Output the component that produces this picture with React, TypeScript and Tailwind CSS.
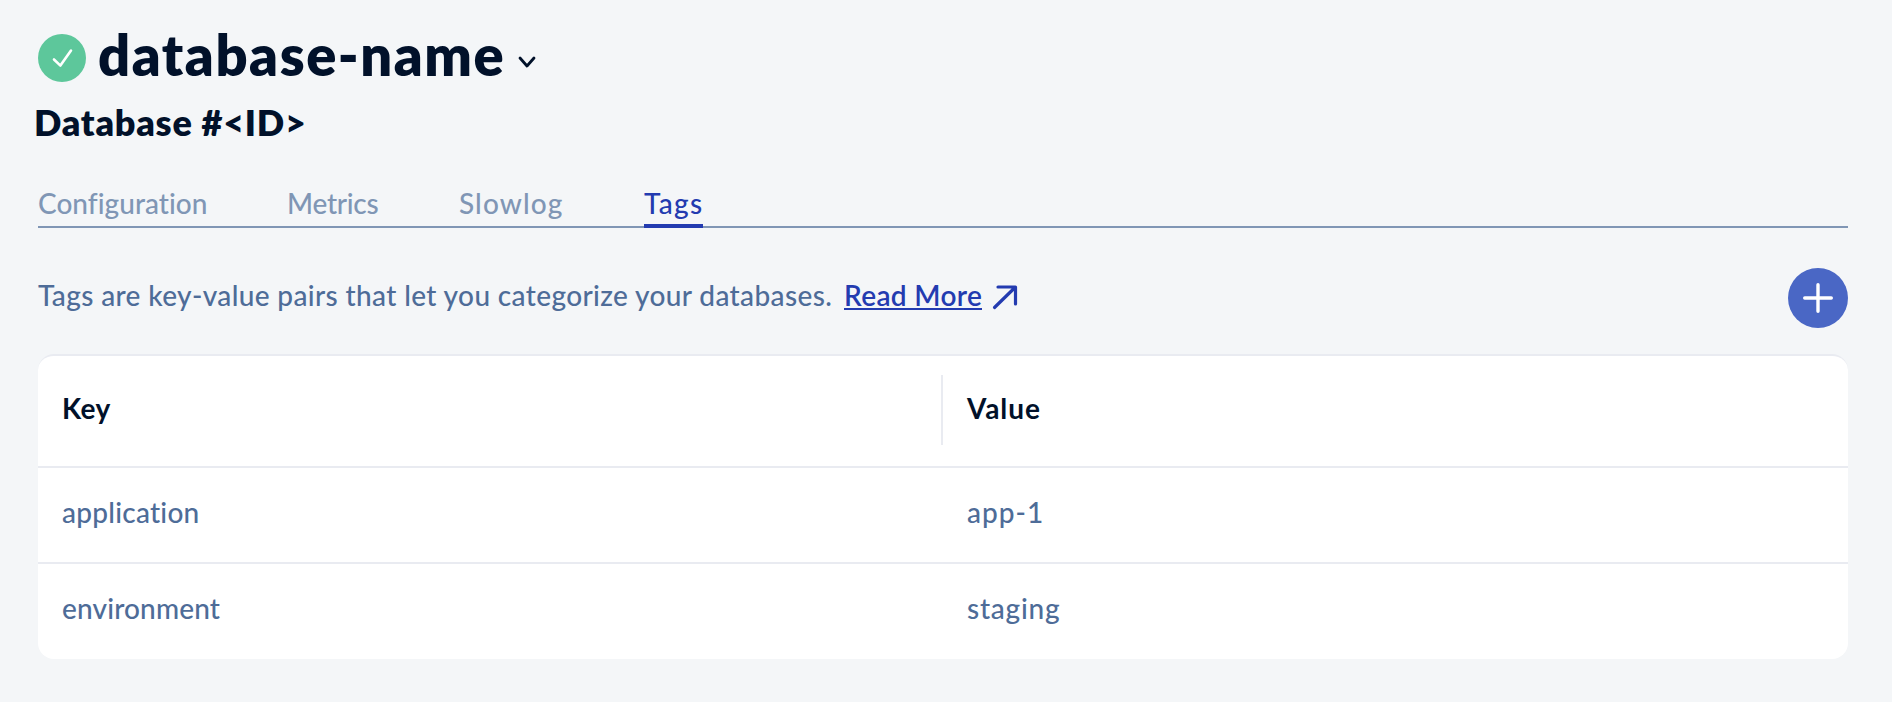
const tabs = [
  { label: "Configuration", box: "w-[170px] tracking-[0.03px]" },
  { label: "Metrics", box: "w-[92px] -ml-px mr-px tracking-[-0.25px]" },
  { label: "Slowlog", box: "w-[104px] -ml-px mr-px tracking-[1.1px]" },
  { label: "Tags", box: "w-[59px] tracking-[1.3px]", active: true },
];

const rows = [
  { key: "application", keyStyle: "tracking-[0.25px]", value: "app-1", valueStyle: "tracking-[1px]" },
  { key: "environment", keyStyle: "tracking-[0.15px]", value: "staging", valueStyle: "tracking-[0.75px]" },
];

function StatusIcon() {
  return (
    <span className="flex size-12 shrink-0 items-center justify-center rounded-full bg-[#5dc79b]">
      <svg width="48" height="48" viewBox="0 0 48 48" fill="none" stroke="#fff" strokeWidth="2.6" strokeLinecap="round" strokeLinejoin="round">
        <path d="M16 25.500 22.400 31.600 33 16.500" />
      </svg>
    </span>
  );
}

export default function App() {
  return (
    <div className="h-[702px] w-[1892px] overflow-hidden bg-[#f4f6f8] pr-[44px] pl-[38px] font-['Lato',sans-serif] text-[28px] leading-[34px] text-[#4e6c98]">
      <header className="pt-[34px]">
        <div className="flex h-12 items-center">
          <StatusIcon />
          <h1 className="ml-[12px] w-[408px] pb-[7px] text-[56px] leading-[48px] font-extrabold tracking-[1.55px] whitespace-nowrap text-[#01112a]">database-name</h1>
          <button className="mt-[8px] ml-[11px] flex" aria-label="Switch database">
            <svg width="20" height="16" viewBox="0 0 20 16" fill="none" stroke="#01112a" strokeWidth="2.8" strokeLinecap="round" strokeLinejoin="round">
              <path d="m3 4 7 8 7-8" />
            </svg>
          </button>
        </div>
        <h2 className="mt-[18px] -ml-[4px] h-[46px] text-[36px] leading-[44px] font-extrabold tracking-[0.75px] whitespace-nowrap text-[#01112a]">Database #&lt;ID&gt;</h2>
      </header>

      <nav className="mt-[40px] flex h-[42px] gap-[80px] border-b-2 border-[#8096b5]">
        {tabs.map((tab) => (
          <a
            key={tab.label}
            className={`${tab.box} h-[42px] shrink-0 font-medium whitespace-nowrap ${tab.active ? "border-b-4 border-[#233bb0] text-[#233bb0]" : "text-[#8096b5]"}`}
          >
            {tab.label}
          </a>
        ))}
      </nav>

      <section className="mt-[40px] flex h-[60px] items-center">
        <p className="w-[806px] pb-[6px] font-medium tracking-[0.37px] whitespace-nowrap">Tags are key-value pairs that let you categorize your databases.</p>
        <a className="mb-[6px] flex h-[34px] items-start text-[#233bb0]">
          <span className="h-[32px] w-[138px] border-b-2 border-[#233bb0] leading-[34px] font-semibold tracking-[0.35px] whitespace-nowrap">Read More</span>
          <svg className="mt-[5px] ml-[9px]" width="28" height="28" viewBox="0 0 28 28" fill="none" stroke="#233bb0" strokeWidth="3.200" strokeLinecap="round" strokeLinejoin="round">
            <path d="M7 4h17.500v17M24 4.500 3.500 24.500" />
          </svg>
        </a>
        <button className="ml-auto flex size-[60px] items-center justify-center rounded-full bg-[#4a67c5]" aria-label="Add tag">
          <svg width="30" height="30" viewBox="0 0 30 30" fill="none" stroke="#fff" strokeWidth="3.400" strokeLinecap="round">
            <path d="M15 1.700v26.600M1.700 15h26.600" />
          </svg>
        </button>
      </section>

      <div className="mt-[26px] h-[305px] overflow-hidden rounded-[16px] border-t-2 border-[#e9ebf1] bg-white">
        <div className="grid h-[112px] grid-cols-2 border-b-2 border-[#e9ebf1] font-bold text-[#01112a]">
          <div className="mt-[19px] h-[70px] border-r-2 border-[#e9ebf1] pt-[16px] pl-6 tracking-[0.4px]">Key</div>
          <div className="mt-[19px] pt-[16px] pl-6 tracking-[0.9px]">Value</div>
        </div>
        {rows.map((row) => (
          <div key={row.key} className="grid h-[96px] grid-cols-2 border-b-2 border-[#e9ebf1] pt-[27px] font-medium last:border-b-0">
            <div className={`pl-6 ${row.keyStyle}`}>{row.key}</div>
            <div className={`pl-6 ${row.valueStyle}`}>{row.value}</div>
          </div>
        ))}
      </div>
    </div>
  );
}
